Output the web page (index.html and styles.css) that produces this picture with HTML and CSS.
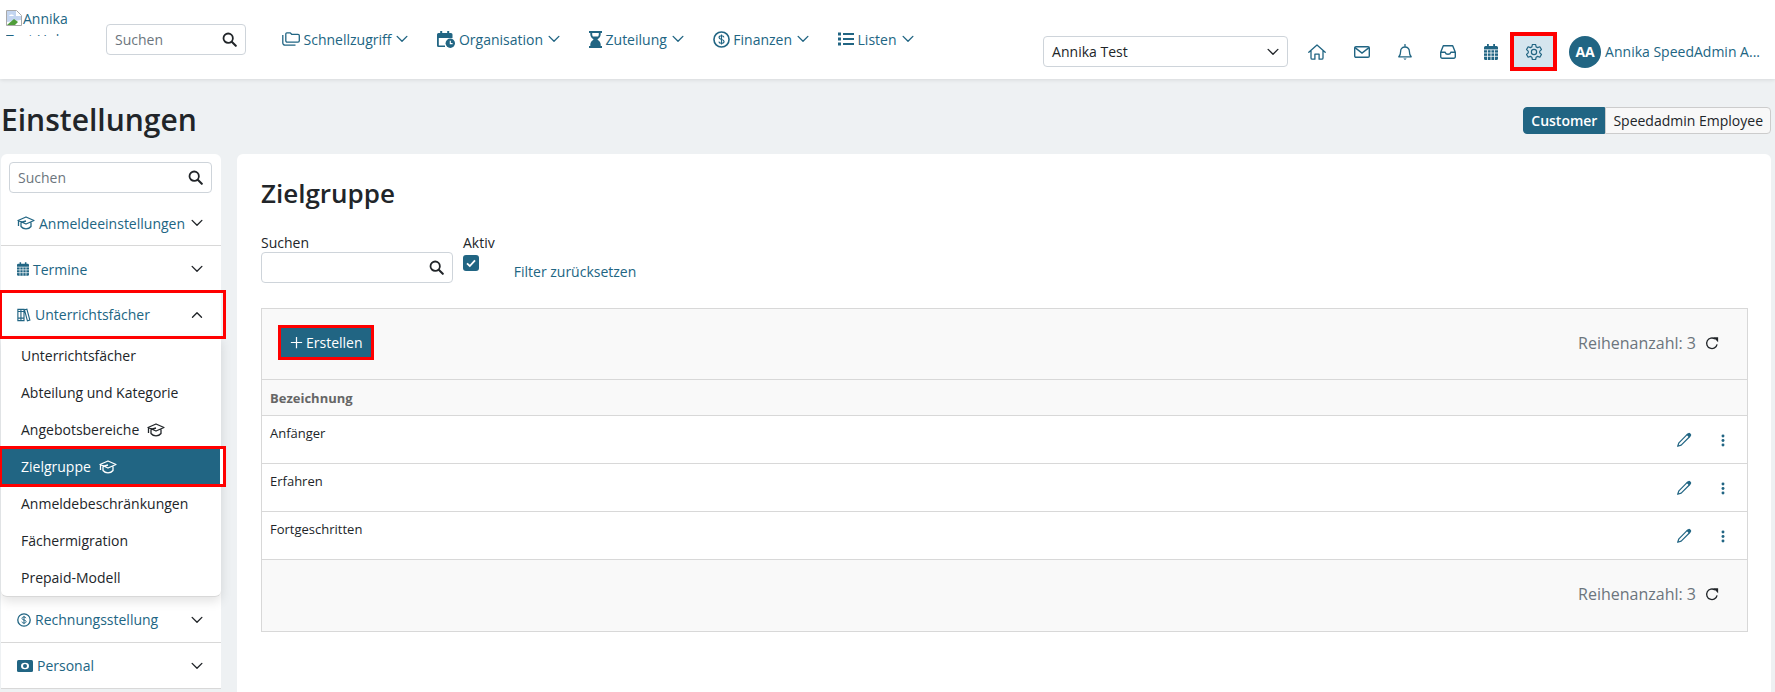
FILE: index.html
```html
<!DOCTYPE html>
<html lang="de">
<head>
  <meta charset="UTF-8">
  <meta name="viewport" content="width=device-width, initial-scale=1.0">
  <title>Einstellungen</title>
  <link rel="stylesheet" href="styles.css">
</head>
<body>
  <!-- icon sprite -->
  <svg class="sprite" xmlns="http://www.w3.org/2000/svg">
    <symbol id="i-search" viewBox="0 0 16 16"><circle cx="6.6" cy="6.6" r="5" fill="none" stroke="currentColor" stroke-width="1.9"/><path d="M10.4 10.4l4.3 4.3" stroke="currentColor" stroke-width="2.2" stroke-linecap="round"/></symbol>
    <symbol id="i-chevron" viewBox="0 0 16 16"><path d="M1.500 4.500L8 11l6.500-6.500" fill="none" stroke="currentColor" stroke-width="1.800" stroke-linecap="round" stroke-linejoin="round"/></symbol>
    <symbol id="i-up" viewBox="0 0 16 16"><path d="M2 11l6-6 6 6" fill="none" stroke="currentColor" stroke-width="1.800" stroke-linecap="round" stroke-linejoin="round"/></symbol>
    <symbol id="i-folders" viewBox="0 0 18 14"><path d="M.8 3v8a2.200 2.200 0 0 0 2.200 2.200h10.500" fill="none" stroke="currentColor" stroke-width="1.300"/><path d="M3.800 1.800A1.100 1.100 0 0 1 4.900.800h3.300l1.500 1.500h6.300a1.300 1.300 0 0 1 1.300 1.300v5.200a1.300 1.300 0 0 1-1.300 1.300H5.100a1.300 1.300 0 0 1-1.300-1.300z" fill="none" stroke="currentColor" stroke-width="1.300"/></symbol>
    <symbol id="i-cal-clock" viewBox="0 0 18 17"><path d="M3.200 0h2v2h5V0h2v2H14a1.500 1.500 0 0 1 1.500 1.500V7H1.800v7.500H8V16H1.500A1.500 1.500 0 0 1 0 14.500v-11A1.500 1.500 0 0 1 1.500 2h1.700z" fill="currentColor"/><circle cx="13.300" cy="12.300" r="4.700" fill="currentColor"/><path d="M13.300 9.700v2.900h2.300" stroke="#fff" fill="none" stroke-width="1.100"/></symbol>
    <symbol id="i-hourglass" viewBox="0 0 13 17"><path d="M0 0h13v2h-1.300v1.500c0 2.300-1.800 3.900-3.300 5 1.500 1.100 3.300 2.700 3.300 5V15H13v2H0v-2h1.300v-1.500c0-2.300 1.800-3.900 3.300-5-1.500-1.100-3.300-2.700-3.300-5V2H0zM3.200 2v1.500c0 .8.300 1.500.7 2.100h5.200c.4-.6.700-1.300.7-2.100V2z" fill="currentColor"/></symbol>
    <symbol id="i-dollar" viewBox="0 0 16 16"><circle cx="8" cy="8" r="7.100" fill="none" stroke="currentColor" stroke-width="1.500"/><path d="M10.300 5.900c-.2-.9-1.100-1.400-2.300-1.400-1.300 0-2.300.6-2.300 1.700 0 2.400 4.700 1.200 4.700 3.600 0 1.100-1.100 1.700-2.400 1.700s-2.300-.6-2.500-1.600M8 3.300v9.400" fill="none" stroke="currentColor" stroke-width="1.100"/></symbol>
    <symbol id="i-list" viewBox="0 0 16 14"><path d="M5 2h11M5 7h11M5 12h11" stroke="currentColor" stroke-width="1.800"/><path d="M0 .5h3v3H0zM0 5.500h3v3H0zM0 10.500h3v3H0z" fill="currentColor"/></symbol>
    <symbol id="i-home" viewBox="0 0 18 16"><path d="M.8 8.200L9 .9l8.200 7.300M3 6.600v7.300a1.300 1.300 0 0 0 1.300 1.300h2.600v-5h4.200v5h2.600a1.300 1.300 0 0 0 1.300-1.300V6.600" fill="none" stroke="currentColor" stroke-width="1.300" stroke-linejoin="round" stroke-linecap="round"/></symbol>
    <symbol id="i-mail" viewBox="0 0 16 12"><rect x=".7" y=".7" width="14.600" height="10.600" rx="1.300" fill="none" stroke="currentColor" stroke-width="1.400"/><path d="M1 1.600l7 5.400 7-5.400" fill="none" stroke="currentColor" stroke-width="1.400"/></symbol>
    <symbol id="i-bell" viewBox="0 0 14 16"><path d="M.8 12.800h12.400c-1.300-1.300-1.800-3-1.800-5.400 0-2.600-1.800-4.400-4.400-4.400S2.600 4.800 2.600 7.400c0 2.400-.5 4.100-1.800 5.400zM7 .5V3" fill="none" stroke="currentColor" stroke-width="1.300" stroke-linecap="round" stroke-linejoin="round"/><path d="M5.300 14.500h3.400L7 16z" fill="currentColor"/></symbol>
    <symbol id="i-inbox" viewBox="0 0 16 14"><path d="M3.300.7h9.400l2.600 6.600v4.500a1.500 1.500 0 0 1-1.500 1.500H2.200a1.500 1.500 0 0 1-1.500-1.500V7.300zM.8 7.300h4.400c.3 1.300 1.300 2 2.800 2s2.500-.7 2.800-2h4.400" fill="none" stroke="currentColor" stroke-width="1.400" stroke-linejoin="round"/></symbol>
    <symbol id="i-cal" viewBox="0 0 14 16"><path d="M3 0h1.800v2h4.400V0H11v2h1.500A1.500 1.500 0 0 1 14 3.500v11a1.500 1.500 0 0 1-1.500 1.500h-11A1.500 1.500 0 0 1 0 14.500v-11A1.500 1.500 0 0 1 1.500 2H3z" fill="currentColor"/><path d="M0 5.800h14M0 9h14M0 12.300h14M3.500 5.800V16M7 5.800V16M10.500 5.800V16" stroke="#fff" stroke-width=".8"/></symbol>
    <symbol id="i-gear" viewBox="1.600 1.600 12.800 12.800"><path d="M6.700 1h2.600l.4 1.900 1.200.6 1.800-.7 1.300 2.300-1.400 1.200v1.400l1.400 1.200-1.300 2.300-1.800-.7-1.200.7-.4 1.800H6.700l-.4-1.800-1.200-.7-1.800.7L2 8.900l1.400-1.200V6.300L2 5.100l1.300-2.300 1.800.7 1.200-.6z" transform="translate(0 1)" fill="none" stroke="currentColor" stroke-width=".95" stroke-linejoin="round"/><circle cx="8" cy="8" r="2.100" fill="none" stroke="currentColor" stroke-width=".95"/></symbol>
    <symbol id="i-grad" viewBox="0 0 18 14"><path d="M9 1L1 4.500 9 8l8-3.500zM4 6.500v4c1.200 1.500 3 2.300 5 2.300s3.800-.8 5-2.300v-4M1.500 5v5M9 5l-5.500 1.500" fill="none" stroke="currentColor" stroke-width="1.300" stroke-linejoin="round"/></symbol>
    <symbol id="i-books" viewBox="0 0 16 16"><path d="M1 1.500h3.500v13H1zM4.500 1.500H8v13H4.500zM8.500 2l2.800-.7 3.400 12.600-2.800.7zM1 4h7M1 11.500h7" fill="none" stroke="currentColor" stroke-width="1.300"/></symbol>
    <symbol id="i-cash" viewBox="0 0 16 12"><rect width="16" height="12" rx="1.500" fill="currentColor"/><ellipse cx="8" cy="6" rx="4" ry="3.300" fill="#fff"/><circle cx="8" cy="6" r="2" fill="currentColor"/></symbol>
    <symbol id="i-pencil" viewBox="0 0 16 16"><path d="M11.500 2.200l2.300 2.300-8.600 8.600-3.500 1.200 1.200-3.500z" fill="none" stroke="currentColor" stroke-width="1.200" stroke-linejoin="round"/><path d="M10.500 2.800l1.600-1.600a1.400 1.400 0 0 1 2 0l.7.700a1.400 1.400 0 0 1 0 2l-1.600 1.600z" fill="currentColor"/></symbol>
    <symbol id="i-dots" viewBox="0 0 4 16"><circle cx="2" cy="2.500" r="1.800" fill="currentColor"/><circle cx="2" cy="8" r="1.800" fill="currentColor"/><circle cx="2" cy="13.500" r="1.800" fill="currentColor"/></symbol>
    <symbol id="i-refresh" viewBox="0 0 16 16"><path d="M13.800 9.500A6 6 0 1 1 11.500 3.500" fill="none" stroke="currentColor" stroke-width="1.500"/><path d="M9.500 1.500h5.500V7z" fill="currentColor"/></symbol>
    <symbol id="i-plus" viewBox="0 0 16 16"><path d="M8 2v12M2 8h12" stroke="currentColor" stroke-width="1.300"/></symbol>
    <symbol id="i-broken" viewBox="0 0 16 16"><path d="M.5.500h10l5 5v10H.500z" fill="#fff" stroke="#a9a9a9"/><path d="M1 1h9v5h5v4L1 12z" fill="#c3d5f0"/><path d="M1 15l7-6 4 3-3 3z" fill="#4f9d3a"/><path d="M3 6c1-2 4-2 5 0z" fill="#fff"/></symbol>
  </svg>

  <!-- top bar -->
  <header class="topbar">
    <div class="logo">
      <svg class="logo-broken"><use href="#i-broken"/></svg>Annika<br>Test Hub
    </div>
    <div class="search search-top">
      <span class="placeholder">Suchen</span>
      <svg class="icon-search"><use href="#i-search"/></svg>
    </div>
    <nav class="mainnav">
      <a class="navlink"><svg class="ic ic-folders"><use href="#i-folders"/></svg>Schnellzugriff<svg class="chev"><use href="#i-chevron"/></svg></a>
      <a class="navlink"><svg class="ic ic-org"><use href="#i-cal-clock"/></svg>Organisation<svg class="chev"><use href="#i-chevron"/></svg></a>
      <a class="navlink"><svg class="ic ic-glass"><use href="#i-hourglass"/></svg>Zuteilung<svg class="chev"><use href="#i-chevron"/></svg></a>
      <a class="navlink"><svg class="ic ic-dollar"><use href="#i-dollar"/></svg>Finanzen<svg class="chev"><use href="#i-chevron"/></svg></a>
      <a class="navlink"><svg class="ic ic-list"><use href="#i-list"/></svg>Listen<svg class="chev"><use href="#i-chevron"/></svg></a>
    </nav>
    <div class="topright">
      <div class="select">Annika Test<svg class="select-chev"><use href="#i-chevron"/></svg></div>
      <div class="iconbar">
        <a class="iconbtn iconbtn-home"><svg class="tb-home"><use href="#i-home"/></svg></a>
        <a class="iconbtn"><svg class="tb-mail"><use href="#i-mail"/></svg></a>
        <a class="iconbtn"><svg class="tb-bell"><use href="#i-bell"/></svg></a>
        <a class="iconbtn"><svg class="tb-inbox"><use href="#i-inbox"/></svg></a>
        <a class="iconbtn"><svg class="tb-cal"><use href="#i-cal"/></svg></a>
        <a class="iconbtn iconbtn-active"><svg class="tb-gear"><use href="#i-gear"/></svg></a>
      </div>
      <div class="user"><span class="avatar">AA</span><span class="username">Annika SpeedAdmin A...</span></div>
    </div>
  </header>

  <div class="page">
    <div class="pagehead">
      <h1>Einstellungen</h1>
      <div class="toggle">
        <span class="toggle-btn toggle-on">Customer</span>
        <span class="toggle-btn">Speedadmin Employee</span>
      </div>
    </div>

    <div class="columns">
      <aside class="sidebar">
        <div class="search search-side">
          <span class="placeholder">Suchen</span>
          <svg class="icon-search"><use href="#i-search"/></svg>
        </div>
        <div class="sideitem sideitem-first"><span class="sidelabel"><svg class="sideic sideic-wide"><use href="#i-grad"/></svg>Anmeldeeinstellungen</span><svg class="sidechev"><use href="#i-chevron"/></svg></div>
        <div class="sideitem sideitem-plain"><span class="sidelabel"><svg class="sideic sideic-small"><use href="#i-cal"/></svg>Termine</span><svg class="sidechev"><use href="#i-chevron"/></svg></div>
        <div class="sideitem sideitem-plain marked"><span class="sidelabel"><svg class="sideic"><use href="#i-books"/></svg>Unterrichtsfächer</span><svg class="sidechev"><use href="#i-up"/></svg></div>
        <ul class="submenu">
          <li>Unterrichtsfächer</li>
          <li>Abteilung und Kategorie</li>
          <li>Angebotsbereiche<svg class="subic"><use href="#i-grad"/></svg></li>
          <li class="sub-active">Zielgruppe<svg class="subic"><use href="#i-grad"/></svg></li>
          <li>Anmeldebeschränkungen</li>
          <li>Fächermigration</li>
          <li>Prepaid-Modell</li>
        </ul>
        <div class="sideitem"><span class="sidelabel"><svg class="sideic"><use href="#i-dollar"/></svg>Rechnungsstellung</span><svg class="sidechev"><use href="#i-chevron"/></svg></div>
        <div class="sideitem"><span class="sidelabel"><svg class="sideic sideic-cash"><use href="#i-cash"/></svg>Personal</span><svg class="sidechev"><use href="#i-chevron"/></svg></div>
      </aside>

      <main class="content">
        <h2>Zielgruppe</h2>
        <div class="filters">
          <div class="field">
            <label>Suchen</label>
            <div class="search search-filter"><svg class="icon-search"><use href="#i-search"/></svg></div>
          </div>
          <div class="field field-check">
            <label>Aktiv</label>
            <span class="checkbox"><svg viewBox="0 0 16 16"><path d="M4 8.300l2.800 2.700L12 5.300" fill="none" stroke="#fff" stroke-width="1.800"/></svg></span>
          </div>
          <a class="resetlink">Filter zurücksetzen</a>
        </div>

        <div class="grid">
          <div class="grid-toolbar">
            <a class="btn-create"><svg><use href="#i-plus"/></svg>Erstellen</a>
            <div class="rowcount">Reihenanzahl: 3<svg><use href="#i-refresh"/></svg></div>
          </div>
          <div class="grid-head">Bezeichnung</div>
          <div class="grid-row"><span>Anfänger</span><div class="rowactions"><svg class="pencil"><use href="#i-pencil"/></svg><svg class="dots"><use href="#i-dots"/></svg></div></div>
          <div class="grid-row"><span>Erfahren</span><div class="rowactions"><svg class="pencil"><use href="#i-pencil"/></svg><svg class="dots"><use href="#i-dots"/></svg></div></div>
          <div class="grid-row"><span>Fortgeschritten</span><div class="rowactions"><svg class="pencil"><use href="#i-pencil"/></svg><svg class="dots"><use href="#i-dots"/></svg></div></div>
          <div class="grid-footer">
            <div class="rowcount">Reihenanzahl: 3<svg><use href="#i-refresh"/></svg></div>
          </div>
        </div>
      </main>
    </div>
  </div>
</body>
</html>
```

FILE: styles.css
```css
* {
  margin: 0;
  padding: 0;
  box-sizing: border-box;
}
html, body {
  height: 692px;
  overflow: hidden;
}
body {
  font-family: "Open Sans", sans-serif;
  font-size: 14px;
  background: #eef1f3;
  color: #212529;
}
.sprite {
  display: none;
}
a {
  color: #216583;
}

/* top bar */
.topbar {
  height: 79px;
  background: #fff;
  box-shadow: 0 1px 4px rgba(0, 0, 0, 0.1);
  display: flex;
  align-items: flex-start;
  padding-left: 6px;
}
.logo {
  width: 100px;
  height: 28px;
  margin-top: 8px;
  overflow: hidden;
  line-height: 21px;
  font-size: 14px;
  color: #216583;
}
.logo-broken {
  width: 16px;
  height: 16px;
  vertical-align: -2px;
  margin-right: 1px;
}
.search {
  display: flex;
  align-items: center;
  justify-content: space-between;
  background: #fff;
  border: 1px solid #ced4da;
  border-radius: 4px;
  padding: 0 8px;
  height: 31px;
}
.search .placeholder {
  color: #6c757d;
}
.icon-search {
  width: 15px;
  height: 15px;
  color: #212529;
  margin-left: auto;
}
.search-top {
  width: 140px;
  margin-top: 24px;
}
.mainnav {
  display: flex;
  gap: 29px;
  margin-left: 36px;
  margin-top: 29px;
}
.navlink {
  display: flex;
  align-items: center;
  height: 20px;
}
.ic {
  flex: none;
  margin-right: 3.500px;
}
.ic-folders {
  width: 18px;
  height: 14px;
}
.ic-org {
  width: 18px;
  height: 17px;
}
.ic-glass {
  width: 13px;
  height: 17px;
}
.ic-dollar {
  width: 17px;
  height: 17px;
}
.ic-list {
  width: 16px;
  height: 14px;
}
.chev {
  width: 12px;
  height: 12px;
  margin-left: 5px;
}
.topright {
  display: flex;
  align-items: center;
  margin-left: auto;
  margin-top: 34px;
  padding-right: 15px;
}
.select {
  width: 245px;
  height: 31px;
  border: 1px solid #ced4da;
  border-radius: 4px;
  padding: 0 8px;
  display: flex;
  align-items: center;
  justify-content: space-between;
}
.select-chev {
  width: 12px;
  height: 12px;
}
.iconbar {
  display: flex;
  margin-left: 7px;
}
.iconbtn {
  width: 43px;
  height: 35px;
  display: flex;
  align-items: center;
  justify-content: center;
}
.iconbtn-home {
  width: 45px;
  padding-right: 2px;
}
.tb-home {
  width: 18px;
  height: 16px;
}
.tb-mail {
  width: 16px;
  height: 12px;
}
.tb-bell {
  width: 14px;
  height: 16px;
}
.tb-inbox {
  width: 16px;
  height: 14px;
}
.tb-cal {
  width: 14px;
  height: 16px;
}
.tb-gear {
  width: 16px;
  height: 16px;
}
.iconbtn-active {
  background: #d5e5ee;
  outline: 4px solid #f00;
  outline-offset: -2px;
}
.user {
  display: flex;
  align-items: center;
  margin-left: 14px;
}
.avatar {
  width: 32px;
  height: 32px;
  border-radius: 50%;
  background: #216583;
  color: #fff;
  font-weight: 700;
  font-size: 14px;
  display: flex;
  align-items: center;
  justify-content: center;
}
.username {
  color: #216583;
  margin-left: 4px;
}

/* page */
.page {
  padding: 0 4px 0 1px;
}
.pagehead {
  display: flex;
  justify-content: space-between;
  align-items: center;
  padding: 7px 0 0 0;
  height: 75px;
}
h1 {
  font-size: 30px;
  font-weight: 600;
  line-height: 1.2;
}
.toggle {
  display: flex;
  margin-top: 1px;
}
.toggle-btn {
  height: 27px;
  line-height: 25px;
  padding: 0 7px;
  border: 1px solid #ccc;
  background: #f8f8f8;
  border-radius: 0 4px 4px 0;
}
.toggle-on {
  background: #216583;
  border-color: #216583;
  color: #fff;
  font-weight: 600;
  border-radius: 4px 0 0 4px;
}
.columns {
  display: flex;
  gap: 16px;
  align-items: flex-start;
}

/* sidebar */
.sidebar {
  width: 220px;
  flex: none;
  background: #fff;
  border-radius: 6px 6px 0 0;
  padding-top: 8px;
}
.search-side {
  margin: 0 9px 8px 8px;
}
.sideitem {
  display: flex;
  align-items: center;
  justify-content: space-between;
  height: 46px;
  padding: 0 18px 0 16px;
  border-bottom: 1px solid #d8d8d8;
}
.sideitem-first {
  height: 45px;
}
.sideitem-plain {
  border-bottom: none;
}
.sidelabel {
  color: #216583;
  display: flex;
  align-items: center;
}
.sideic {
  width: 14px;
  height: 14px;
  margin-right: 4px;
  color: #216583;
}
.sideic-wide {
  width: 18px;
}
.sideic-small {
  width: 12px;
}
.sideic-cash {
  width: 16px;
}
.sidechev {
  width: 12px;
  height: 12px;
  color: #212529;
}
.marked {
  outline: 3px solid #f00;
  outline-offset: -1px;
  width: 223px;
  height: 45px;
  padding-right: 21px;
  position: relative;
}
.submenu {
  list-style: none;
  background: #fff;
  box-shadow: 0 4px 12px rgba(0, 0, 0, 0.12);
  border-radius: 0 0 6px 6px;
  border-bottom: 1px solid #d8d8d8;
}
.submenu li {
  height: 37px;
  line-height: 37px;
  padding-left: 20px;
  display: flex;
  align-items: center;
}
.subic {
  width: 18px;
  height: 14px;
  margin-left: 8px;
}
.sub-active {
  background: #216583;
  color: #fff;
  outline: 3px solid #f00;
  outline-offset: -1px;
  width: 223px;
  position: relative;
  box-shadow: inset -4px 0 0 #fff;
}

/* content */
.content {
  flex: 1;
  background: #fff;
  border-radius: 6px 6px 0 0;
  height: 540px;
  padding: 20px 23px 0 24px;
}
h2 {
  font-size: 26px;
  font-weight: 600;
  line-height: 38px;
  margin-bottom: 21px;
}
.filters {
  display: flex;
  align-items: flex-start;
  height: 75px;
}
.field label {
  display: block;
  line-height: 19px;
  height: 19px;
}
.search-filter {
  width: 192px;
  margin-top: 0;
}
.field-check {
  margin-left: 10px;
}
.checkbox {
  display: block;
  width: 16px;
  height: 16px;
  background: #216583;
  border-radius: 3px;
  margin-top: 3px;
}
.checkbox svg {
  display: block;
  width: 16px;
  height: 16px;
}
.resetlink {
  margin-left: 19px;
  margin-top: 29px;
}
.grid {
  border: 1px solid #d8d8d8;
}
.grid-toolbar {
  height: 71px;
  background: #f9f9f9;
  display: flex;
  align-items: center;
  justify-content: space-between;
  padding: 0 28px 3px 19px;
  border-bottom: 1px solid #d8d8d8;
}
.btn-create {
  display: flex;
  align-items: center;
  width: 90px;
  height: 29px;
  padding-left: 8px;
  background: #216583;
  color: #fff;
  outline: 3px solid #f00;
  outline-offset: 0;
}
.btn-create svg {
  width: 15px;
  height: 15px;
  margin-right: 2px;
}
.rowcount {
  display: flex;
  align-items: center;
  font-size: 16px;
  color: #6c757d;
}
.rowcount svg {
  width: 14px;
  height: 14px;
  margin-left: 9px;
  color: #212529;
}
.grid-head {
  height: 36px;
  line-height: 37px;
  padding-left: 8px;
  background: #f9f9f9;
  font-size: 13px;
  font-weight: 700;
  color: #666;
  border-bottom: 1px solid #d8d8d8;
}
.grid-row {
  height: 48px;
  padding: 8px 0 0 8px;
  font-size: 13px;
  display: flex;
  justify-content: space-between;
  border-bottom: 1px solid #d8d8d8;
}
.rowactions {
  display: flex;
  align-items: center;
  height: 32px;
  color: #216583;
  padding-right: 22px;
}
.pencil {
  width: 16px;
  height: 16px;
}
.dots {
  width: 4px;
  height: 13px;
  margin-left: 29px;
}
.grid-footer {
  height: 71px;
  background: #f9f9f9;
  display: flex;
  align-items: center;
  justify-content: flex-end;
  padding: 0 28px 3px 0;
}
```
